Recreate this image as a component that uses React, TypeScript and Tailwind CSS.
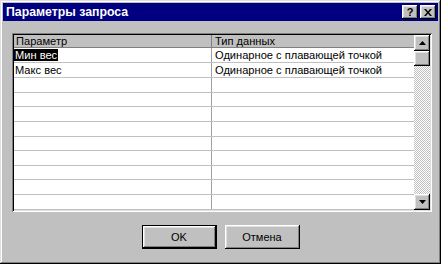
import React from 'react';

const raised =
  'shadow-[inset_-1px_-1px_#000,inset_1px_1px_#fff,inset_-2px_-2px_#808080,inset_2px_2px_#dfdfdf]';

const rows: { name: string; type: string; h: string }[] = [
  { name: 'Мин вес', type: 'Одинарное с плавающей точкой', h: 'h-[15px]' },
  { name: 'Макс вес', type: 'Одинарное с плавающей точкой', h: 'h-[15px]' },
  { name: '', type: '', h: 'h-[15px]' },
  { name: '', type: '', h: 'h-[14px]' },
  { name: '', type: '', h: 'h-[15px]' },
  { name: '', type: '', h: 'h-[15px]' },
  { name: '', type: '', h: 'h-[15px]' },
  { name: '', type: '', h: 'h-[15px]' },
  { name: '', type: '', h: 'h-[14px]' },
  { name: '', type: '', h: 'h-[15px]' },
  { name: '', type: '', h: 'h-[15px]' },
];

function ArrowBtn({ down }: { down?: boolean }) {
  return (
    <div className={`w-[16px] h-[16px] bg-[#c0c0c0] flex items-center justify-center ${raised}`}>
      <svg width="7" height="4" viewBox="0 0 7 4">
        {down ? <path d="M0 0h7L3.5 4z" fill="#000" /> : <path d="M0 4h7L3.5 0z" fill="#000" />}
      </svg>
    </div>
  );
}

export default function App() {
  return (
    <div
      className="w-[441px] h-[264px] bg-[#c0c0c0] p-[3px] flex flex-col shadow-[inset_-1px_-1px_#000,inset_1px_1px_#dfdfdf,inset_-2px_-2px_#808080,inset_2px_2px_#fff]"
      style={{ fontFamily: '"Liberation Sans", Arial, sans-serif' }}
    >
      {/* title bar */}
      <div className="h-[18px] bg-[#000080] flex items-center pl-[3px] pr-[2px]">
        <span className="text-white font-bold text-[12.3px] leading-none flex-1">Параметры запроса</span>
        <div className="flex gap-[2px]">
          <div className={`w-[16px] h-[14px] bg-[#c0c0c0] flex items-center justify-center ${raised}`}>
            <span className="text-[11px] font-bold leading-none text-black">?</span>
          </div>
          <div className={`w-[16px] h-[14px] bg-[#c0c0c0] flex items-center justify-center ${raised}`}>
            <svg width="8" height="7" viewBox="0 0 8 7">
              <path d="M0 0h2l2 2.5L6 0h2L5 3.5 8 7H6L4 4.5 2 7H0l3-3.5z" fill="#000" />
            </svg>
          </div>
        </div>
      </div>

      {/* grid */}
      <div className="ml-[9px] mt-[12px] w-[420px] h-[179px] bg-white flex shadow-[inset_1px_1px_#808080,inset_-1px_-1px_#fff,inset_2px_2px_#000,inset_-2px_-2px_#dfdfdf] p-[2px]">
        <div className="flex-1 flex flex-col text-[11.1px] text-black">
          <div className="h-[13px] flex bg-[#c0c0c0] border-b border-[#808080]">
            <div className="w-[198px] border-r border-[#808080] pl-[2px] leading-[12px]">Параметр</div>
            <div className="flex-1 pl-[3px] leading-[12px]">Тип данных</div>
          </div>
          {rows.map((r, i) => (
            <div key={i} className={`${r.h} flex border-b border-[#c0c0c0]`}>
              <div className="w-[198px] border-r border-[#a0a0a0] flex items-center">
                {r.name &&
                  (i === 0 ? (
                    <span className="bg-black text-white px-[1px] leading-[12px]">{r.name}</span>
                  ) : (
                    <span className="pl-[1px]">{r.name}</span>
                  ))}
              </div>
              <div className="flex-1 flex items-center pl-[3px]">{r.type}</div>
            </div>
          ))}
        </div>
        <div className="w-[16px] flex flex-col bg-[repeating-conic-gradient(#c0c0c0_0_25%,#fff_0_50%)] bg-[length:2px_2px]">
          <ArrowBtn />
          <div className={`w-[16px] h-[15px] bg-[#c0c0c0] ${raised}`} />
          <div className="flex-1" />
          <ArrowBtn down />
        </div>
      </div>

      {/* buttons */}
      <div className="flex justify-center gap-[8px] mt-[13px]">
        <div className="w-[75px] h-[24px] border border-black">
          <div className={`w-full h-full bg-[#c0c0c0] flex items-center justify-center text-[11px] text-black ${raised}`}>
            OK
          </div>
        </div>
        <div className={`w-[75px] h-[24px] bg-[#c0c0c0] flex items-center justify-center text-[11px] text-black ${raised}`}>
          Отмена
        </div>
      </div>
    </div>
  );
}
